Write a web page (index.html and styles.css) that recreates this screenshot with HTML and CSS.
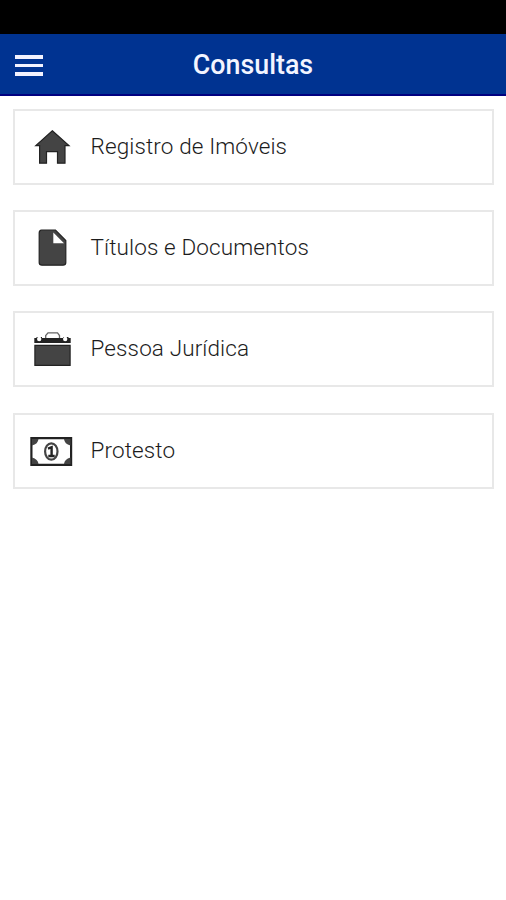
FILE: index.html
```html
<!DOCTYPE html>
<html lang="pt-BR">
<head>
<meta charset="utf-8">
<title>Consultas</title>
<link rel="stylesheet" href="styles.css">
</head>
<body>
<div class="status-bar"></div>
<header class="toolbar">
  <button class="menu" aria-label="Menu"><span></span><span></span><span></span></button>
  <h1 class="title">Consultas</h1>
</header>
<main class="list">
  <a class="card">
    <svg class="icon" viewBox="0 0 44 44"><path class="edge" d="M22.3 5.7 39 20.6H35V38.2H27.5V26.6H16.5V38.2H9.6V20.6H5.8Z"/></svg>
    <span class="label">Registro de Imóveis</span>
  </a>
  <a class="card">
    <svg class="icon" viewBox="0 0 44 44"><path class="edge" d="M11.500 4.200H25.500L35.800 14.500V36.500Q35.800 39.200 33 39.200H12Q9.200 39.200 9.200 36.500V7Q9.200 4.200 11.500 4.200Z"/><path fill="#fff" d="M23.300 6.500V17.300H34Z"/></svg>
    <span class="label">Títulos e Documentos</span>
  </a>
  <a class="card">
    <svg class="icon" viewBox="0 0 44 44"><path fill="none" stroke="#666" stroke-width="1.300" d="M15.700 11V8.500L18 5.900H27.500L29.500 8.500V11"/><path class="dark" d="M4.300 11H6.500V10H12V11H33V10H38.500V11H40.700V16H4.300Z"/><circle cx="9.200" cy="12" r="2.200" fill="#fff"/><circle cx="35.200" cy="12" r="2.200" fill="#fff"/><path class="edge" d="M4.900 18.400H40.100V38.400H4.900Z"/></svg>
    <span class="label">Pessoa Jurídica</span>
  </a>
  <a class="card">
    <svg class="icon" viewBox="0 0 44 44"><path fill="#fff" stroke="#222" stroke-width="2.200" d="M1.400 9.200H41.100V35.800H1.400Z"/><path class="corner" d="M2 10H8.500Q8 15 2 16.500ZM40.500 10H34Q34.500 15 40.500 16.500ZM2 35H8.500Q8 30 2 28.500ZM40.500 35H34Q34.500 30 40.500 28.500Z"/><ellipse cx="21.300" cy="22.500" rx="6.200" ry="8.200" fill="#fff" stroke="#444" stroke-width="2.200"/><path fill="none" stroke="#222" stroke-width="2.400" d="M18 19.600 21.600 18.200V27M18.300 27H24.700"/></svg>
    <span class="label">Protesto</span>
  </a>
</main>
</body>
</html>
```
FILE: styles.css
```css
* { box-sizing: border-box; }
body {
  margin: 0;
  min-height: 900px;
  background: #fff;
  font-family: Roboto, "Liberation Sans", sans-serif;
}
.status-bar { height: 34px; background: #000; }
.toolbar {
  display: grid;
  grid-template-columns: 57px 1fr 57px;
  align-items: center;
  height: 62px;
  background: #003391;
  border-bottom: 2px solid #000080;
}
.menu {
  display: flex;
  flex-direction: column;
  gap: 5px;
  width: 28px;
  margin: 3px 0 0 14.500px;
  padding: 0;
  border: 0;
  background: none;
}
.menu span { height: 3.5px; background: #f3f3ff; }
.title {
  margin: 0;
  padding-top: 2px;
  color: #f3f5ff;
  font-size: 26.800px;
  font-weight: 500;
  line-height: 32px;
  text-align: center;
}
.list {
  display: flex;
  flex-direction: column;
  gap: 25.200px;
  padding: 13px 12px 0 13px;
}
.card {
  display: flex;
  align-items: center;
  height: 76px;
  padding-left: 15px;
  border: 2px solid #e8e8e8;
}
.icon { width: 44px; height: 44px; flex: none; }
.edge { fill: #444; stroke: #222; stroke-width: 1.200; }
.dark { fill: #222; }
.corner { fill: #444; }
.label {
  margin-left: 16.500px;
  padding-bottom: 2px;
  color: #1c1c1c;
  font-size: 22.500px;
  font-weight: 300;
  letter-spacing: 0.120px;
  line-height: 30px;
}
```
